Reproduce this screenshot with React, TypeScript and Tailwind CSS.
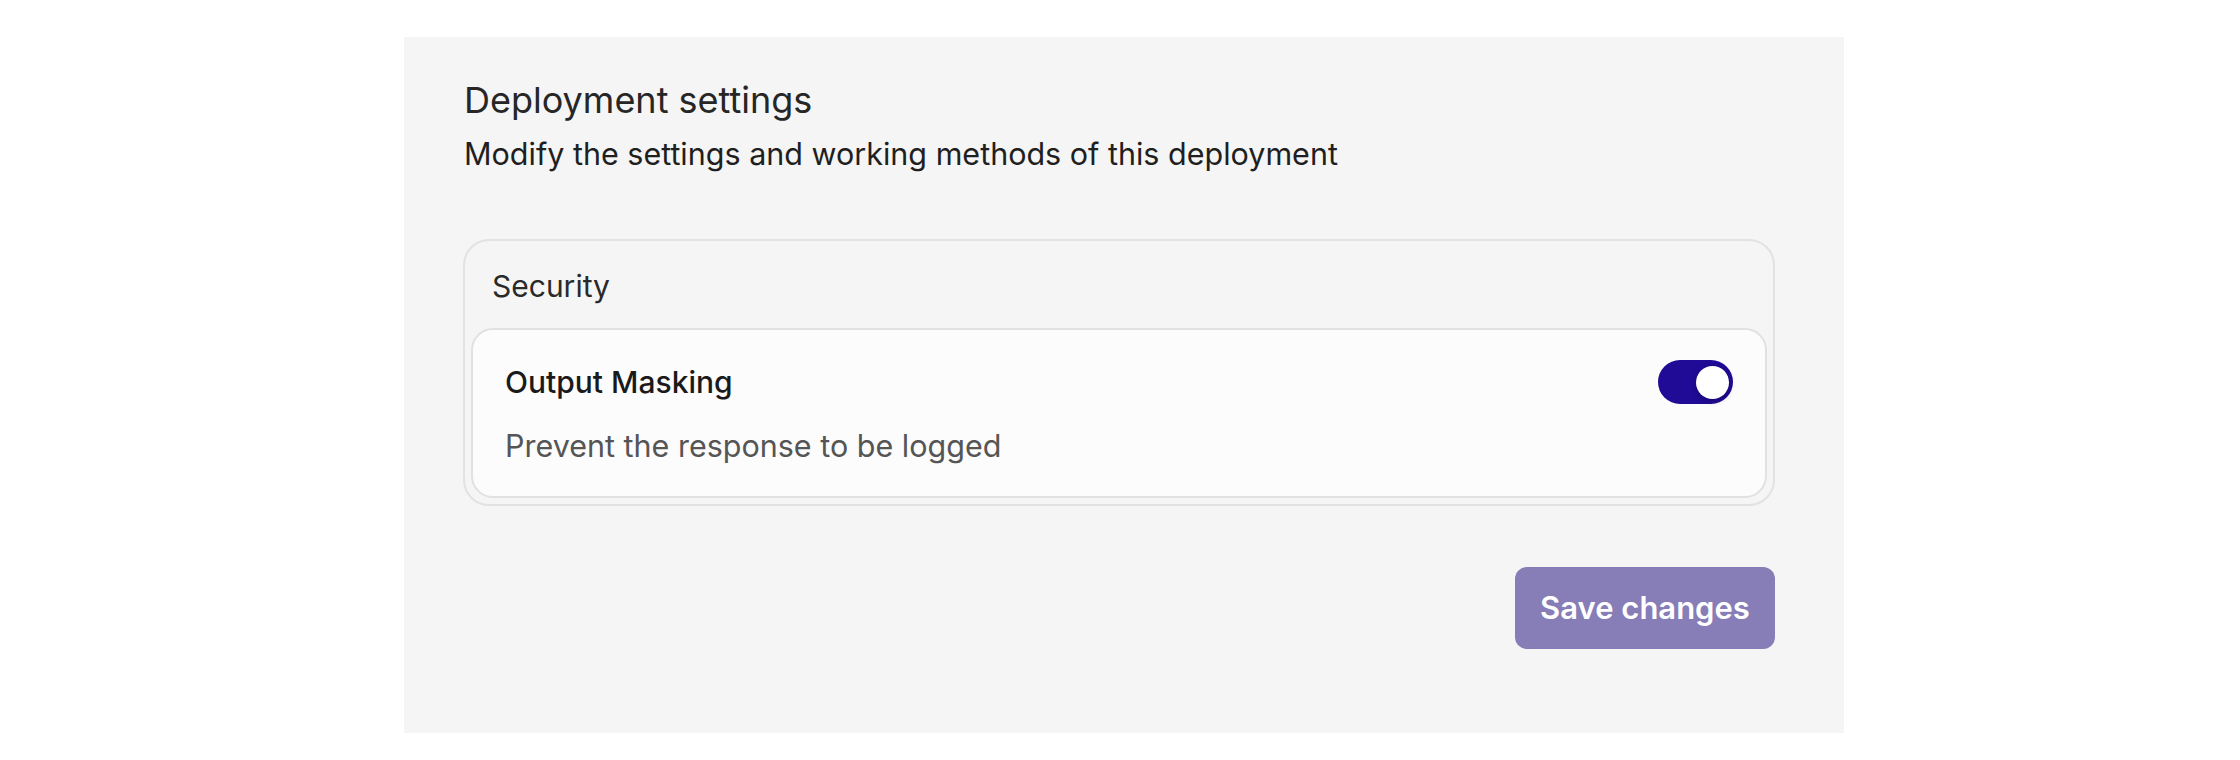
export default function App() {
  return (
    <div className="w-[2240px] h-[760px] bg-white pt-[37px] pl-[404px]" style={{ fontFamily: 'Inter, "Noto Sans", sans-serif' }}>
      <div className="w-[1440px] h-[696px] bg-[#f5f5f5] pt-[39px] pl-[59px] pr-[69px] flex flex-col">
        <h1 className="pl-[1px] text-[36px] leading-[48px] font-normal text-[#262626]">Deployment settings</h1>
        <p className="pl-[1px] mt-[8px] text-[30.5px] leading-[44px] text-[#1f1f1f]">
          Modify the settings and working methods of this deployment
        </p>
        <div className="mt-[63px] rounded-[26px] border-2 border-[#e2e2e2] bg-[#f5f5f5] pt-[23px] px-[6px] pb-[6px]">
          <div className="pl-[21px] text-[30px] leading-[44px] text-[#2a2a2a]">Security</div>
          <div className="mt-[20px] rounded-[22px] border-2 border-[#e1e1e1] bg-[#fcfcfc] pt-[30px] pb-[28px] pl-[32px] pr-[32px]">
            <div className="flex items-center justify-between">
              <span className="text-[30px] leading-[44px] font-medium text-[#1a1a1a]">Output Masking</span>
              <button className="relative w-[75px] h-[44px] rounded-full bg-[#1f0b96]">
                <span className="absolute right-[4px] top-[5.5px] w-[33px] h-[33px] rounded-full bg-white shadow-[0_2px_6px_rgba(0,0,0,0.25)]" />
              </button>
            </div>
            <p className="mt-[20px] text-[30.5px] leading-[44px] text-[#555555]">Prevent the response to be logged</p>
          </div>
        </div>
        <div className="mt-[61px] flex justify-end">
          <button className="w-[260px] h-[82px] rounded-[12px] bg-[#877db7] text-white text-[31px] font-semibold">
            Save changes
          </button>
        </div>
      </div>
    </div>
  );
}
